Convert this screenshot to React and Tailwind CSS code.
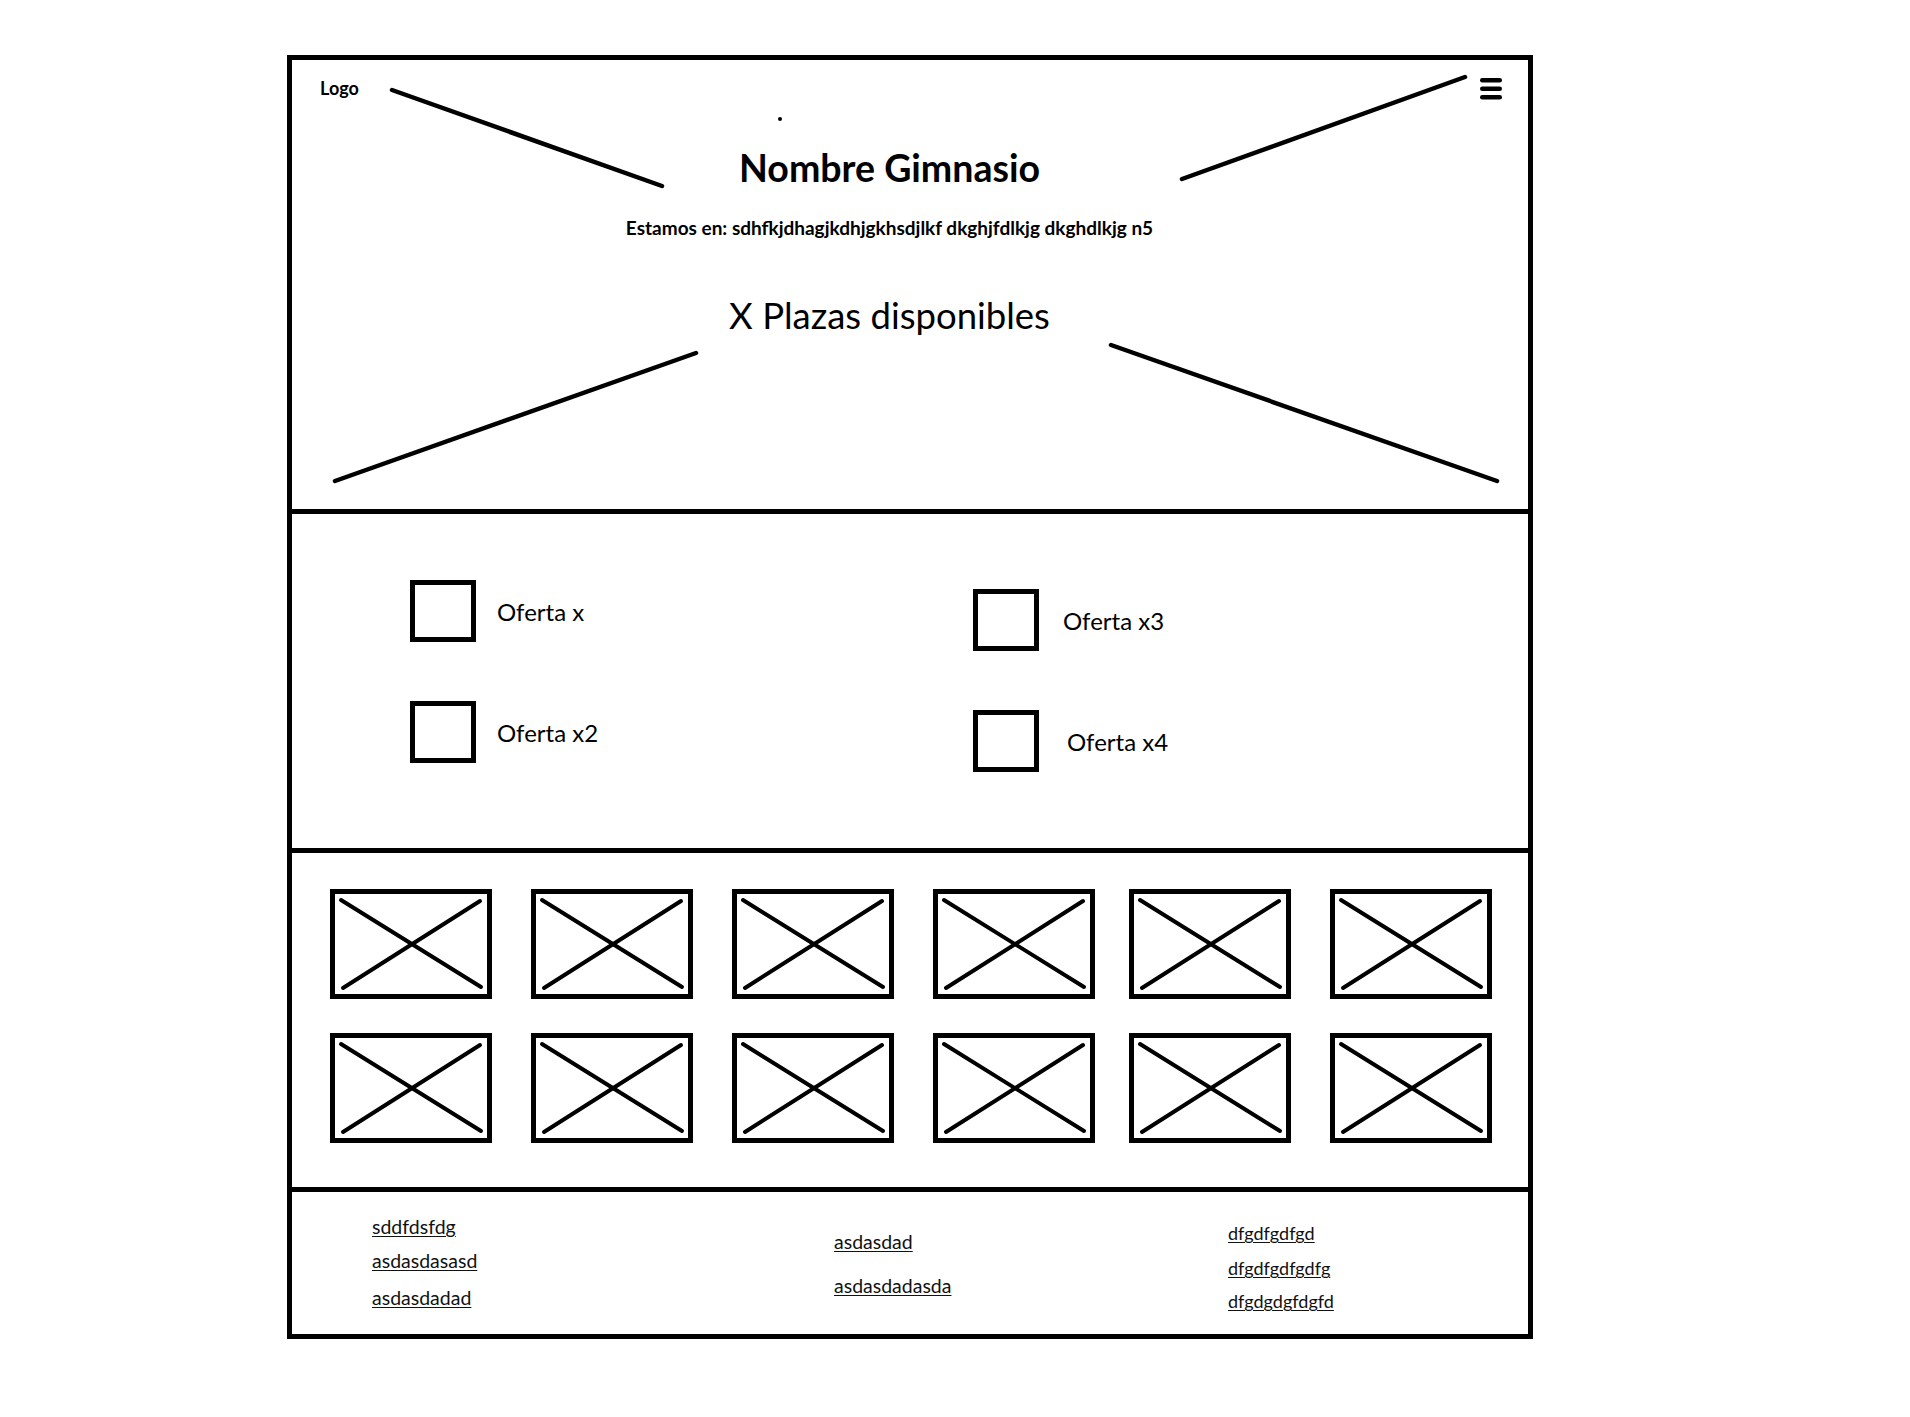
import React from "react";

function XBox({ shift }) {
  return (
    <div className={`border-[5px] border-black h-[110px] w-[162px] bg-white ${shift ? "-translate-x-[5px]" : ""}`}>
      <svg width="152" height="100" viewBox="0 0 152 100" className="block">
        <line x1="6" y1="6" x2="146" y2="93" stroke="black" strokeWidth="4" strokeLinecap="round" />
        <line x1="8" y1="94" x2="145" y2="7" stroke="black" strokeWidth="4" strokeLinecap="round" />
      </svg>
    </div>
  );
}

function Offer({ label, gap }) {
  return (
    <div className="flex items-center">
      <div className="w-[66px] h-[62px] border-[5px] border-black shrink-0" />
      <span className={`${gap} text-[24px] leading-none text-black mt-[2px]`}>{label}</span>
    </div>
  );
}

function FLink({ children, className }) {
  return (
    <a href="#" className={`block leading-none underline decoration-1 underline-offset-[2px] text-[#111] ${className}`}>
      {children}
    </a>
  );
}

export default function App() {
  return (
    <div className="bg-white w-full min-h-[1417px] pt-[55px] pl-[287px]" style={{ fontFamily: "Lato, 'Open Sans', sans-serif" }}>
      <div className="w-[1246px] border-[5px] border-black flex flex-col">
        {/* Header */}
        <div className="relative h-[454px] border-b-[5px] border-black flex flex-col">
          <svg className="absolute inset-0 pointer-events-none" width="1236" height="449" viewBox="0 0 1236 449">
            <line x1="100" y1="30" x2="370" y2="126" stroke="black" strokeWidth="4.5" strokeLinecap="round" />
            <line x1="890" y1="119" x2="1173" y2="17" stroke="black" strokeWidth="4.5" strokeLinecap="round" />
            <line x1="43" y1="421" x2="404" y2="293" stroke="black" strokeWidth="4.5" strokeLinecap="round" />
            <line x1="819" y1="285" x2="1205" y2="421" stroke="black" strokeWidth="4.5" strokeLinecap="round" />
            <circle cx="488" cy="59" r="2" fill="black" />
          </svg>
          <div className="flex justify-between items-start pt-[17px] pl-[28px] pr-[26px]">
            <span className="text-[18px] font-bold leading-none mt-[2px] text-black">Logo</span>
            <svg width="22" height="22" viewBox="0 0 22 22" className="mt-[1px]">
              <rect x="0" y="0" width="22" height="4.6" rx="2.3" fill="black" />
              <rect x="0" y="8.5" width="22" height="4.6" rx="2.3" fill="black" />
              <rect x="0" y="17" width="22" height="4.6" rx="2.3" fill="black" />
            </svg>
          </div>
          <div className="flex flex-col items-center pr-[41px] text-black">
            <h1 className="text-[37.5px] font-bold leading-none mt-[49px]">Nombre Gimnasio</h1>
            <p className="text-[19px] font-bold leading-none mt-[31px]">
              Estamos en: sdhfkjdhagjkdhjgkhsdjlkf dkghjfdlkjg dkghdlkjg n5
            </p>
            <p className="text-[36.5px] leading-none mt-[60px]">X Plazas disponibles</p>
          </div>
        </div>

        {/* Offers */}
        <div className="h-[339px] border-b-[5px] border-black pl-[118px] pt-[66px] grid grid-cols-[563px_1fr]">
          <div className="flex flex-col gap-[59px]">
            <Offer label="Oferta x" gap="ml-[21px]" />
            <Offer label="Oferta x2" gap="ml-[21px]" />
          </div>
          <div className="flex flex-col gap-[59px] mt-[9px]">
            <Offer label="Oferta x3" gap="ml-[24px]" />
            <Offer label="Oferta x4" gap="ml-[28px]" />
          </div>
        </div>

        {/* Gallery */}
        <div className="h-[339px] border-b-[5px] border-black pl-[38px] pt-[36px]">
          <div className="grid grid-cols-[repeat(6,162px)] gap-x-[39px] gap-y-[34px]">
            {Array.from({ length: 12 }).map((_, i) => (
              <XBox key={i} shift={i % 6 >= 4} />
            ))}
          </div>
        </div>

        {/* Footer */}
        <div className="h-[142px] pl-[80px] grid grid-cols-[462px_394px_1fr]">
          <div className="pt-[25px] flex flex-col items-start">
            <FLink className="text-[19.5px]">sddfdsfdg</FLink>
            <FLink className="text-[19.5px] mt-[14px]">asdasdasasd</FLink>
            <FLink className="text-[19.5px] mt-[18px]">asdasdadad</FLink>
          </div>
          <div className="pt-[40px] flex flex-col items-start">
            <FLink className="text-[19.5px]">asdasdad</FLink>
            <FLink className="text-[19.5px] mt-[24px]">asdasdadasda</FLink>
          </div>
          <div className="pt-[32px] flex flex-col items-start">
            <FLink className="text-[18px]">dfgdfgdfgd</FLink>
            <FLink className="text-[18px] mt-[17px]">dfgdfgdfgdfg</FLink>
            <FLink className="text-[18px] mt-[15px]">dfgdgdgfdgfd</FLink>
          </div>
        </div>
      </div>
    </div>
  );
}
